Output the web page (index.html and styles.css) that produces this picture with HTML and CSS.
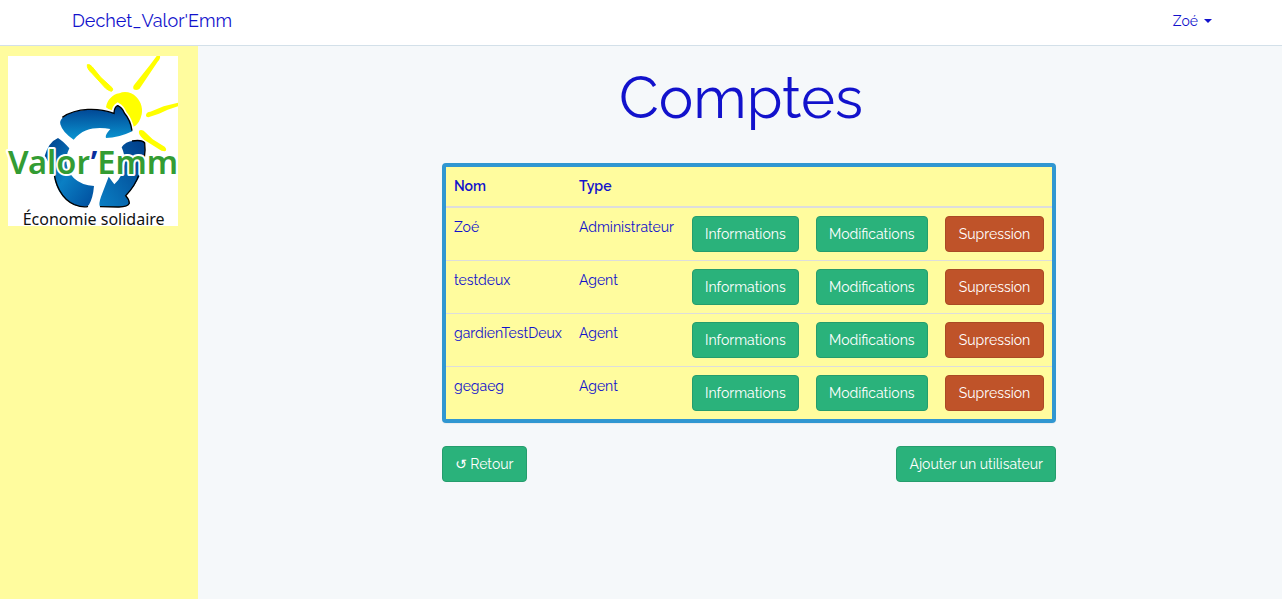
FILE: index.html
```html
<!DOCTYPE html>
<html lang="fr">
<head>
<meta charset="utf-8">
<meta name="viewport" content="width=device-width, initial-scale=1">
<title>Dechet_Valor'Emm</title>
<link rel="stylesheet" href="styles.css">
</head>
<body>
<header class="navbar">
  <a class="brand" href="#">Dechet_Valor'Emm</a>
  <button class="user-menu" type="button">Zoé <span class="caret"></span></button>
</header>
<div class="page">
  <aside class="sidebar">
    <svg class="logo" viewBox="24 48 510 510" role="img" aria-label="Valor'Emm, Économie solidaire">
      <defs>
        <linearGradient id="top" x1="0" y1="0" x2="0" y2="1"><stop offset="0" stop-color="#003c8c"/><stop offset="1" stop-color="#0a96d2"/></linearGradient>
        <linearGradient id="side" x1="0" y1="0" x2="1" y2="1"><stop offset="0" stop-color="#003c88"/><stop offset="0.5" stop-color="#0a7fc4"/><stop offset="1" stop-color="#004c9c"/></linearGradient>
        <linearGradient id="right" x1="1" y1="0" x2="0" y2="1"><stop offset="0" stop-color="#003c88"/><stop offset="1" stop-color="#0a7fc4"/></linearGradient>
      </defs>
      <rect x="24" y="48" width="510" height="510" fill="#fff"/>
      <g fill="#ff0">
        <path d="M318 202 C322 180 337 163 358 160 C374 152 396 157 409 171 C424 185 431 211 423 230 C419 244 411 256 399 261 L350 225Z"/>
        <path d="M262 74 Q270 72 277 81 L302 112 L336 143 Q342 151 334 154 Q326 152 317 145 L277 101 Q260 86 262 74Z" stroke="#ff0" stroke-width="3"/>
        <path d="M470 48 L480 48 Q482 56 473 65 L418 147 Q409 153 401 148 Q397 141 404 133 L450 75Z"/>
        <path d="M438 225 Q439 216 451 215 L491 199 L534 188 V199 L503 209 L477 221 L445 232 Q437 231 438 225Z"/>
        <path d="M417 273 Q421 267 431 272 L458 298 L494 320 Q503 330 494 334 Q484 334 476 327 L432 299 Q414 284 417 273Z"/>
      </g>
      <path d="M181 253 Q176 241 195 227 C231 205 295 202 341 220 Q343 200 353 195 Q366 202 373 219 Q392 241 397 274 Q355 294 318 294 Q315 288 323 277 L331 267 C295 260 250 262 221 299 Q188 278 181 253Z" fill="#fff" stroke="#fff" stroke-width="14"/>
      <path d="M181 253 Q176 241 195 227 C231 205 295 202 341 220 Q343 200 353 195 Q366 202 373 219 Q392 241 397 274 Q355 294 318 294 Q315 288 323 277 L331 267 C295 260 250 262 221 299 Q188 278 181 253Z" fill="url(#top)"/>
      <path d="M187 232 C231 202 295 203 342 220 Q343 200 353 197 Q366 202 373 219 Q392 241 396 272" fill="none" stroke="#000" stroke-width="4"/>
      <path d="M174 294 Q188 302 208 325 C192 356 198 391 222 415 Q246 437 282 438 Q279 474 267 494 C258 506 227 501 207 485 C177 465 162 429 161 392 L134 348 Q146 306 174 294Z" fill="url(#side)"/>
      <path d="M161 389 C164 432 184 477 223 494 Q250 504 264 499" fill="none" stroke="#000" stroke-width="4"/>
      <path d="M365 322 Q376 304 400 302 Q424 298 434 307 Q438 340 427 389 Q407 440 376 467 Q389 479 388 491 Q380 503 353 501 L300 500 Q295 493 303 470 L326 410 Q330 415 343 433 Q370 409 374 367 Q375 345 365 322Z" fill="url(#right)"/>
      <path d="M396 303 Q426 298 434 309 Q440 350 418 401 Q406 438 377 467 Q388 478 388 490 Q383 502 353 501 L300 500" fill="none" stroke="#000" stroke-width="4"/>
      <text class="wordmark" x="24" y="401">Valor<tspan class="apostrophe">’</tspan>Emm</text>
      <text class="tagline" x="68" y="556">Économie solidaire</text>
    </svg>
  </aside>
  <main class="content">
    <h1 class="title">Comptes</h1>
    <section class="accounts">
      <div class="panel">
        <table class="table">
          <colgroup><col class="col-name"><col class="col-type"><col class="col-info"><col class="col-edit"><col class="col-delete"></colgroup>
          <thead><tr><th scope="col">Nom</th><th scope="col">Type</th><td></td><td></td><td></td></tr></thead>
          <tbody>
            <tr><td>Zoé</td><td>Administrateur</td><td><button class="btn" type="button">Informations</button></td><td><button class="btn" type="button">Modifications</button></td><td><button class="btn danger" type="button">Supression</button></td></tr>
            <tr><td>testdeux</td><td>Agent</td><td><button class="btn" type="button">Informations</button></td><td><button class="btn" type="button">Modifications</button></td><td><button class="btn danger" type="button">Supression</button></td></tr>
            <tr><td>gardienTestDeux</td><td>Agent</td><td><button class="btn" type="button">Informations</button></td><td><button class="btn" type="button">Modifications</button></td><td><button class="btn danger" type="button">Supression</button></td></tr>
            <tr><td>gegaeg</td><td>Agent</td><td><button class="btn" type="button">Informations</button></td><td><button class="btn" type="button">Modifications</button></td><td><button class="btn danger" type="button">Supression</button></td></tr>
          </tbody>
        </table>
      </div>
      <div class="actions">
        <button class="btn" type="button">↺ Retour</button>
        <button class="btn" type="button">Ajouter un utilisateur</button>
      </div>
    </section>
  </main>
</div>
</body>
</html>
```
FILE: styles.css
```css
* { box-sizing: border-box; }
body {
  margin: 0;
  min-height: 100vh;
  display: flex;
  flex-direction: column;
  background: #f5f8fa;
  color: #1212cc;
  font: 14px/22px Raleway, Lato, "DejaVu Sans", sans-serif;
}
button { font: inherit; cursor: pointer; }
.navbar {
  display: flex;
  align-items: center;
  justify-content: space-between;
  min-height: 46px;
  padding: 0 70px 4px 72px;
  background: #fff;
  border-bottom: 1px solid #d3e0e9;
}
.brand { color: inherit; font-size: 18px; text-decoration: none; }
.user-menu {
  display: flex;
  align-items: center;
  gap: 6px;
  padding: 0;
  border: 0;
  background: none;
  color: inherit;
}
.caret { border: 4px solid transparent; border-top-color: currentColor; border-bottom: 0; }
.page { flex: 1; display: flex; }
.sidebar { flex: 0 0 198px; padding: 10px 8px; background: #fffc9e; }
.logo { display: block; width: 170px; overflow: visible; }
.wordmark {
  font: 600 98px "Noto Sans", sans-serif;
  fill: #339c33;
  stroke: #fff;
  stroke-width: 12px;
  stroke-linejoin: round;
  paint-order: stroke;
}
.apostrophe { fill: #0a2f9c; }
.tagline { font: 48px "Noto Sans", sans-serif; fill: #111; }
.content { flex: 1; padding: 20px 16px 40px 18px; }
.title { margin: 0 0 33px; font-size: 58px; line-height: 64px; font-weight: 400; text-align: center; }
.accounts { width: 100%; max-width: 630px; margin: 0 auto; padding-left: 16px; }
.panel {
  border: 4px solid #3097d1;
  border-radius: 4px;
  background: #fffc9e;
  box-shadow: 0 1px 1px rgba(0, 0, 0, 0.05);
}
.table { width: 100%; table-layout: fixed; border-collapse: separate; border-spacing: 0; }
.col-name { width: 125px; }
.col-type { width: 113px; }
.col-info { width: 124px; }
.col-edit { width: 129px; }
.table th, .table td { padding: 8px; text-align: left; vertical-align: top; border-top: 1px solid #ddd; }
.table thead th, .table thead td { border-top: 0; padding-bottom: 9px; border-bottom: 2px solid #ddd; }
.table th { font-weight: 600; }
.table tbody tr:first-child td { border-top: 0; }
.btn {
  padding: 6px 12px;
  border: 1px solid #259d6d;
  border-radius: 4px;
  background: #2ab27b;
  color: #fff;
  white-space: nowrap;
}
.table .btn { display: block; }
.danger { background: #bf5329; border-color: #aa4a24; }
.table .danger { width: 100%; }
.actions { display: flex; justify-content: space-between; margin-top: 23px; }
```
